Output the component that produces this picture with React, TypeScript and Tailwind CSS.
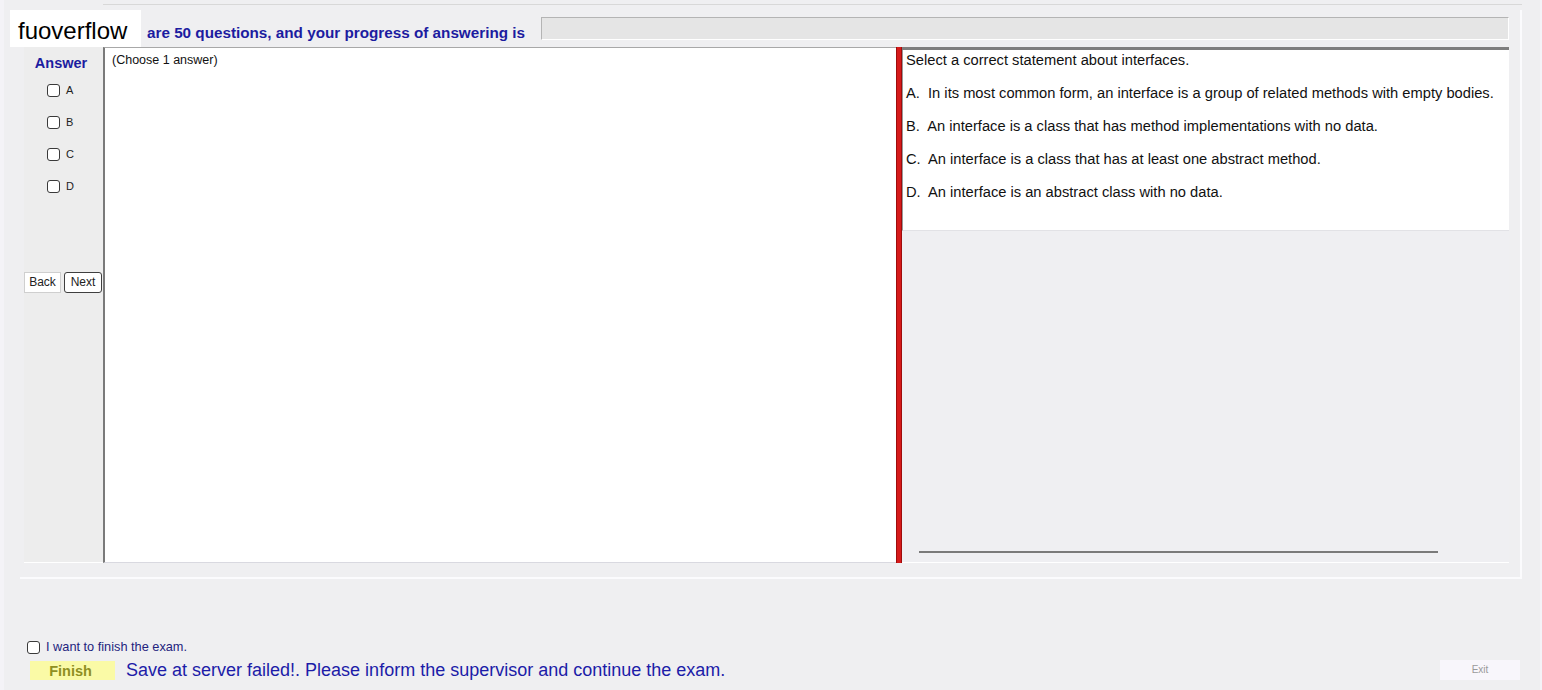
const options = [
  "A.  In its most common form, an interface is a group of related methods with empty bodies.",
  "B.  An interface is a class that has method implementations with no data.",
  "C.  An interface is a class that has at least one abstract method.",
  "D.  An interface is an abstract class with no data.",
];

function Box() {
  return <span className="block w-[13px] h-[13px] border border-[#3a3a3a] rounded-[3px] bg-white" />;
}

export default function App() {
  return (
    <div className="relative w-[1542px] h-[690px] overflow-hidden bg-[#f4f3f7] font-['Liberation_Sans',Arial,sans-serif]">
      <div className="ml-[4px] mr-[2px] h-[690px] bg-[#efeff1] flex flex-col">
        {/* top strip */}
        <div className="h-[5px] ml-[99px] mr-[18px] border-b border-[#d8d8d8]" />

        {/* main exam panel */}
        <div className="ml-[16px] mt-[5px] w-[1502px] h-[569px] border-r-2 border-b-2 border-[#fbfbfd] flex flex-col">
          <div className="flex items-center h-[23px] mt-[7px]">
            <div className="ml-[127px] pt-[8px] text-[15.25px] leading-none font-bold text-[#1c1ca0] whitespace-nowrap">
              are 50 questions, and your progress of answering is
            </div>
            <div className="ml-auto mr-[11px] w-[968px] h-[23px] bg-[#e5e5e5] border border-t-[#b4b4b4] border-l-[#b4b4b4] border-r-white border-b-white" />
          </div>

          <div className="flex mt-[7px] h-[516px]">
            {/* answer column */}
            <div className="ml-[4px] w-[79px] bg-[#ededed] flex flex-col items-center border-b border-white">
              <div className="mt-[9px] text-[14.5px] leading-none font-bold text-[#1c1ca0] -ml-[5px]">Answer</div>
              <div className="mt-[13px] flex flex-col gap-[19px] -ml-[6px]">
                {["A", "B", "C", "D"].map((l) => (
                  <div key={l} className="flex items-center gap-[6px] h-[13px]">
                    <Box />
                    <span className="text-[11px] leading-none text-[#222]">{l}</span>
                  </div>
                ))}
              </div>
              <div className="mt-[79px] flex gap-[3px] self-start">
                <button className="w-[37px] h-[21px] bg-white border border-[#cfcfcf] text-[12px] leading-none text-[#222]">Back</button>
                <button className="w-[38px] h-[21px] bg-white border border-[#3f3f3f] rounded-[3px] text-[12px] leading-none text-[#222]">Next</button>
              </div>
            </div>

            {/* answer area */}
            <div className="w-[793px] bg-white border-l-2 border-t border-[#7a7a7a] border-t-[#a8a8a8] border-b border-b-[#d9d9e0]">
              <div className="ml-[7px] mt-[6px] text-[12.5px] leading-none text-[#111]">(Choose 1 answer)</div>
            </div>

            {/* splitter */}
            <div className="w-[6px] bg-[#d61a1a] border-l border-r border-[#9e0c0c]" />

            {/* question area */}
            <div className="w-[607px] flex flex-col border-t-[3px] border-[#7e7e7e]">
              <div className="h-[181px] bg-white border-l border-[#9a9a9a] border-b border-b-[#e2e2e6] pl-[3px] pt-[1px] text-[14.7px] leading-none text-[#111]">
                <div className="h-[18px] flex items-center">Select a correct statement about interfaces.</div>
                {options.map((o) => (
                  <div key={o} className="mt-[15px] h-[18px] flex items-center whitespace-pre">{o}</div>
                ))}
              </div>
              <div className="flex-1 bg-[#efeff2] flex flex-col justify-end pb-[9px] border-b border-white">
                <div className="ml-[17px] w-[519px] h-[2px] bg-[#7a7a7a]" />
              </div>
            </div>
          </div>
        </div>

        {/* footer */}
        <div className="mt-[61px] ml-[23px] flex items-center gap-[6px] h-[14px]">
          <Box />
          <span className="text-[12.75px] leading-none text-[#23237e]">I want to finish the exam.</span>
        </div>
        <div className="mt-[6px] flex items-center h-[20px]">
          <div className="ml-[26px] w-[85px] h-[19px] bg-[#fafaa6] flex items-center justify-center text-[14.5px] font-bold text-[#8f8f22] leading-none pt-[2px] pr-[4px]">
            Finish
          </div>
          <div className="ml-[11px] text-[18px] leading-none text-[#1c1ca8] whitespace-nowrap">
            Save at server failed!. Please inform the supervisor and continue the exam.
          </div>
          <div className="ml-auto mr-[20px] w-[80px] h-[20px] bg-[#f8f6fb] flex items-center justify-center text-[10px] text-[#9a9a9a] leading-none">
            Exit
          </div>
        </div>
      </div>

      {/* watermark */}
      <div className="absolute left-[10px] top-[10px] w-[131px] h-[37px] bg-white flex items-center pl-[8px] pt-[5px] text-[24px] leading-none text-black">
        fuoverflow
      </div>
    </div>
  );
}
